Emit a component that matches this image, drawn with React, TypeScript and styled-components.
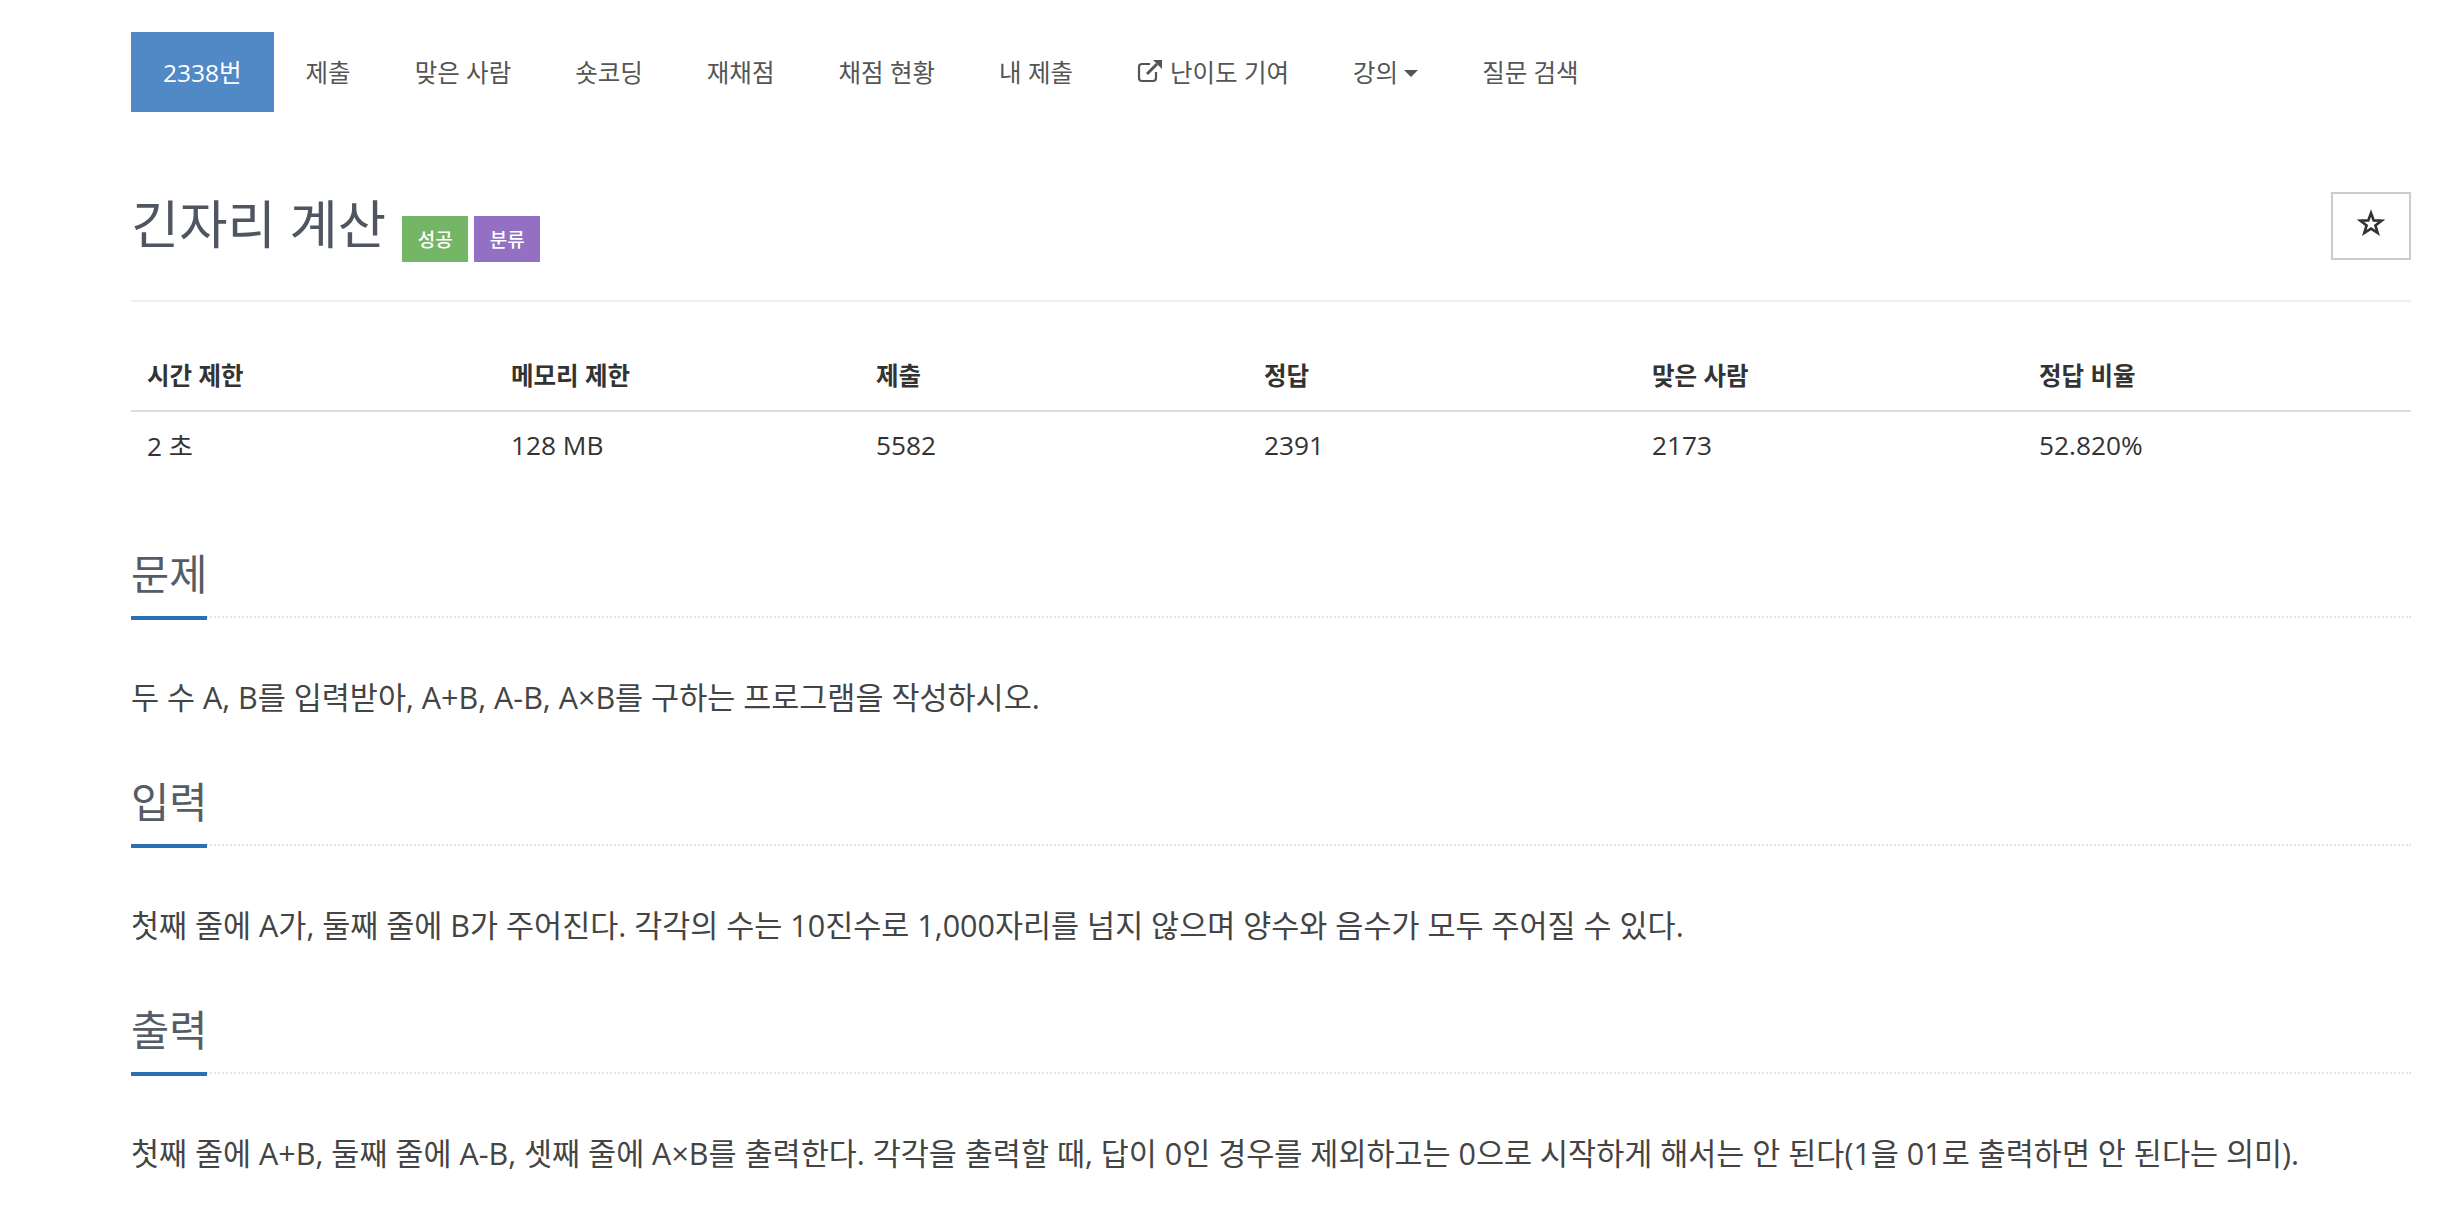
import React from "react";
import styled, { createGlobalStyle } from "styled-components";

const GlobalStyle = createGlobalStyle`
  html, body {
    margin: 0;
    background: #fff;
  }
  body {
    font-family: "Open Sans", "Noto Sans CJK KR", sans-serif;
    color: #333;
  }
`;

const Page = styled.div`
  width: 2450px;
  height: 1220px;
  overflow: hidden;
  box-sizing: border-box;
  padding: 32px 39px 0 131px;
`;

const Nav = styled.ul`
  display: flex;
  height: 80px;
  margin: 0;
  padding: 0;
  list-style: none;
`;

const NavItem = styled.li<{ $active?: boolean }>`
  display: flex;
  align-items: center;
  padding: 0 32px 2px;
  font-size: 24.5px;
  color: ${(p) => (p.$active ? "#fff" : "#555")};
  background: ${(p) => (p.$active ? "#5089c6" : "transparent")};
`;

const Caret = styled.span`
  width: 0;
  height: 0;
  margin-left: 6px;
  margin-top: 5px;
  border-top: 7px solid #555;
  border-left: 7px solid transparent;
  border-right: 7px solid transparent;
`;

const TitleRow = styled.div`
  display: flex;
  align-items: flex-start;
  justify-content: space-between;
  height: 108px;
  margin-top: 80px;
  border-bottom: 2px solid #eee;
`;

const TitleLeft = styled.div`
  display: flex;
  align-items: flex-start;
`;

const Title = styled.h1`
  margin: 0;
  font-size: 52.5px;
  line-height: 64px;
  font-weight: 400;
  color: #4f5661;
`;

const Label = styled.span<{ $first?: boolean; $color: string }>`
  display: flex;
  align-items: center;
  justify-content: center;
  width: 66px;
  height: 46px;
  margin: 24px 0 0 ${(p) => (p.$first ? "16px" : "6px")};
  font-size: 19px;
  font-weight: 500;
  color: #fff;
  background: ${(p) => p.$color};
`;

const StarButton = styled.button`
  display: flex;
  align-items: center;
  justify-content: center;
  width: 80px;
  height: 68px;
  padding: 0 0 6px;
  box-sizing: border-box;
  border: 2px solid #ccc;
  background: #fff;
`;

const InfoTable = styled.table`
  width: 100%;
  margin: 36px 0 48px;
  border-collapse: collapse;
  table-layout: fixed;
`;

const HeadCell = styled.th`
  height: 72px;
  padding: 0 16px;
  text-align: left;
  font-size: 24.5px;
  font-weight: 700;
  border-bottom: 2px solid #ddd;
`;

const BodyCell = styled.td`
  height: 66px;
  padding: 0 16px 4px;
  font-size: 26.25px;
`;

const SectionHead = styled.div`
  height: 86px;
  border-bottom: 2px dotted #e5e5e5;
`;

const SectionTitle = styled.h2`
  display: inline-block;
  height: 90px;
  margin: 0;
  padding-top: 2px;
  box-sizing: border-box;
  font-size: 41.5px;
  line-height: 84px;
  font-weight: 400;
  color: #555c66;
  border-bottom: 4px solid #2a70b8;
`;

const SectionBody = styled.p`
  height: 140px;
  margin: 0;
  padding-top: 57px;
  box-sizing: border-box;
  font-size: 30.5px;
  line-height: 44px;
  color: #444;
`;

const navItems = ["제출", "맞은 사람", "숏코딩", "재채점", "채점 현황", "내 제출"];

const columns = [
  { head: "시간 제한", value: "2 초", width: "364px" },
  { head: "메모리 제한", value: "128 MB", width: "365px" },
  { head: "제출", value: "5582", width: "388px" },
  { head: "정답", value: "2391", width: "388px" },
  { head: "맞은 사람", value: "2173", width: "387px" },
  { head: "정답 비율", value: "52.820%", width: "388px" },
];

const sections = [
  {
    title: "문제",
    body: "두 수 A, B를 입력받아, A+B, A-B, A×B를 구하는 프로그램을 작성하시오.",
  },
  {
    title: "입력",
    body: "첫째 줄에 A가, 둘째 줄에 B가 주어진다. 각각의 수는 10진수로 1,000자리를 넘지 않으며 양수와 음수가 모두 주어질 수 있다.",
  },
  {
    title: "출력",
    body: "첫째 줄에 A+B, 둘째 줄에 A-B, 셋째 줄에 A×B를 출력한다. 각각을 출력할 때, 답이 0인 경우를 제외하고는 0으로 시작하게 해서는 안 된다(1을 01로 출력하면 안 된다는 의미).",
  },
];

const ExternalLinkIcon = () => (
  <svg width="26" height="24" viewBox="0 0 26 24" fill="none" style={{ marginRight: 7 }}>
    <path
      d="M13 5H5a3 3 0 0 0-3 3v11a3 3 0 0 0 3 3h11a3 3 0 0 0 3-3v-6"
      stroke="#555"
      strokeWidth="2.2"
    />
    <path d="M10 15 20 5" stroke="#555" strokeWidth="3" />
    <path d="M16 1h9v9z" fill="#555" />
  </svg>
);

const StarIcon = () => (
  <svg width="28" height="28" viewBox="0 0 28 28">
    <path
      d="M14 4l2.7 7.4 8 .2-6.3 4.8 2.3 7.6L14 19.6 7.3 24l2.3-7.6-6.3-4.8 8-.2z"
      fill="none"
      stroke="#333"
      strokeWidth="2.6"
    />
  </svg>
);

const App = () => {
  return (
    <Page>
      <GlobalStyle />
      <Nav>
        <NavItem $active>2338번</NavItem>
        {navItems.map((item) => (
          <NavItem key={item}>{item}</NavItem>
        ))}
        <NavItem>
          <ExternalLinkIcon />
          난이도 기여
        </NavItem>
        <NavItem>
          강의
          <Caret />
        </NavItem>
        <NavItem>질문 검색</NavItem>
      </Nav>
      <TitleRow>
        <TitleLeft>
          <Title>긴자리 계산</Title>
          <Label $first $color="#74b566">성공</Label>
          <Label $color="#9370c4">분류</Label>
        </TitleLeft>
        <StarButton>
          <StarIcon />
        </StarButton>
      </TitleRow>
      <InfoTable>
        <colgroup>
          {columns.map((col) => (
            <col key={col.head} style={{ width: col.width }} />
          ))}
        </colgroup>
        <thead>
          <tr>
            {columns.map((col) => (
              <HeadCell key={col.head}>{col.head}</HeadCell>
            ))}
          </tr>
        </thead>
        <tbody>
          <tr>
            {columns.map((col) => (
              <BodyCell key={col.head}>{col.value}</BodyCell>
            ))}
          </tr>
        </tbody>
      </InfoTable>
      {sections.map((section) => (
        <section key={section.title}>
          <SectionHead>
            <SectionTitle>{section.title}</SectionTitle>
          </SectionHead>
          <SectionBody>{section.body}</SectionBody>
        </section>
      ))}
    </Page>
  );
};

export default App;
